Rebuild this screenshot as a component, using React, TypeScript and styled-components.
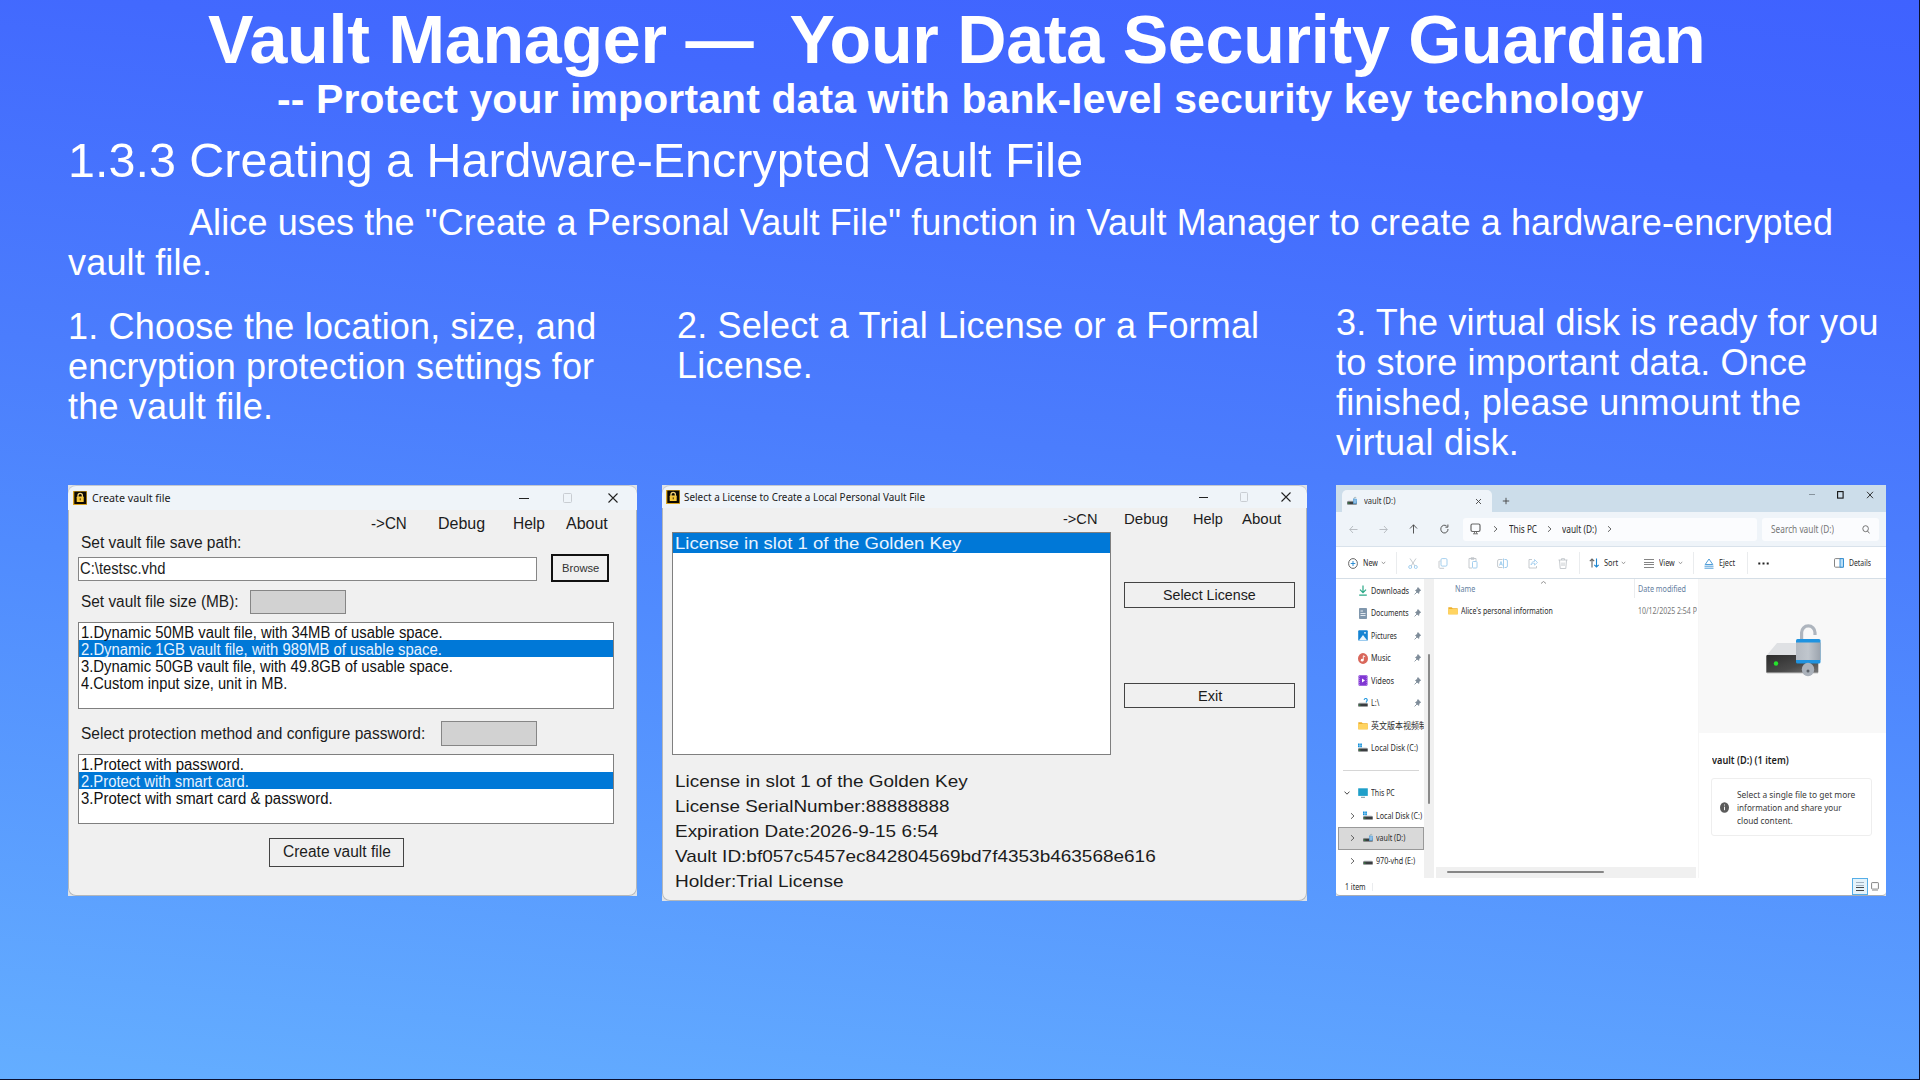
import React, { ReactNode, useLayoutEffect, useRef, useState } from "react";
import styled, { createGlobalStyle, css } from "styled-components";

const ARIAL = '"Liberation Sans", Arial, sans-serif';
const SEGOE = '"Noto Sans", "Noto Sans CJK SC", sans-serif';

const GlobalStyle = createGlobalStyle`
  *, *::before, *::after { box-sizing: border-box; }
  html, body { margin: 0; padding: 0; background: #000; }
  svg { display: block; flex: none; }
`;

/* ---------- text that fills a given measure ---------- */

const Measure = styled.span<{ $w: number; $ml: number }>`
  display: block;
  flex: none;
  width: ${(p) => p.$w}px;
  margin-left: ${(p) => p.$ml}px;
  white-space: pre;
`;

const Run = styled.span`
  display: inline-block;
  transform-origin: 0 50%;
`;

type FitProps = { w: number; ml?: number; spaced?: boolean; children: string };

function Fit({ w, ml = 0, spaced = false, children }: FitProps) {
  const ref = useRef<HTMLSpanElement>(null);
  const [natural, setNatural] = useState(0);
  useLayoutEffect(() => {
    if (ref.current) setNatural(ref.current.offsetWidth);
  }, [children]);
  const style = !natural
    ? undefined
    : spaced
      ? { letterSpacing: (w - natural) / children.length }
      : { transform: `scaleX(${w / natural})` };
  return (
    <Measure $w={w} $ml={ml}>
      <Run ref={ref} style={style}>
        {children}
      </Run>
    </Measure>
  );
}

/* ---------- slide ---------- */

const Slide = styled.main`
  width: 1920px;
  height: 1080px;
  overflow: hidden;
  display: flex;
  flex-direction: column;
  color: #fff;
  font-family: ${ARIAL};
  background: linear-gradient(186deg, #3f62ff 0%, #4269fe 15%, #4b7dfd 42%, #508bfe 58%, #64aeff 100%);
  border-right: 1px solid #0a1030;
  border-bottom: 1px solid #0a1030;
`;

const Title = styled.h1`
  margin: 1px 0 0 208px;
  height: 76px;
  font-size: 68.2px;
  line-height: 76px;
  font-weight: 700;
`;

const Subtitle = styled.h2`
  margin: 0 0 0 277px;
  height: 44px;
  font-size: 40.9px;
  line-height: 44px;
  font-weight: 700;
`;

const Heading = styled.h3`
  margin: 12px 0 0 68px;
  height: 55px;
  font-size: 48.4px;
  line-height: 55px;
  font-weight: 400;
`;

const Paragraph = styled.div<{ $top?: number }>`
  margin-top: ${(p) => p.$top ?? 0}px;
  font-size: 36px;
  line-height: 40px;
`;

const Intro = styled(Paragraph)`
  margin: 15px 0 0 68px;
  height: 80px;
`;

const Steps = styled.section`
  display: grid;
  grid-template-columns: 595px 673px 560px;
  padding: 23px 0 0 68px;
  height: 202px;
`;

const Shots = styled.section`
  display: flex;
  align-items: flex-start;
  padding-left: 68px;
`;

/* ---------- dialog windows ---------- */

const Backing = styled.div<{ $w: number; $h: number; $ml?: number }>`
  flex: none;
  width: ${(p) => p.$w}px;
  height: ${(p) => p.$h}px;
  margin-left: ${(p) => p.$ml ?? 0}px;
  background: #dfe3e8;
`;

const Dialog = styled.div`
  height: 100%;
  display: flex;
  flex-direction: column;
  overflow: hidden;
  border-radius: 8px;
  background: #f0f0f0;
  box-shadow: inset 0 0 0 1px #b3b7bb;
  color: #1c1c1c;
  font-family: ${ARIAL};
`;

const TitleBar = styled.div<{ $h: number }>`
  flex: none;
  display: flex;
  align-items: center;
  height: ${(p) => p.$h}px;
  background: #eff4f9;
  box-shadow: inset 0 1px 0 #c3c8d0;
  border-radius: 8px 8px 0 0;
  font-family: ${SEGOE};
  font-size: 11px;
  color: #1b1b1b;
`;

const Row = styled.div<{ $h: number; $size?: number; $mt?: number; $top?: boolean }>`
  flex: none;
  display: flex;
  align-items: ${(p) => (p.$top ? "flex-start" : "center")};
  height: ${(p) => p.$h}px;
  margin-top: ${(p) => p.$mt ?? 0}px;
  font-size: ${(p) => p.$size ?? 16}px;
  line-height: 1.15;
`;

const MenuRow = styled(Row)`
  padding-top: 1px;
`;

const LabelText = styled.div`
  padding-top: 1px;
`;

const Field = styled.div<{ $w: number; $h: number; $ml?: number; $mt?: number; $off?: boolean }>`
  flex: none;
  display: flex;
  align-items: center;
  width: ${(p) => p.$w}px;
  height: ${(p) => p.$h}px;
  margin: ${(p) => p.$mt ?? 0}px 0 0 ${(p) => p.$ml ?? 0}px;
  border: 1px solid #868686;
  background: ${(p) => (p.$off ? "#d2d2d2" : "#fff")};
`;

const PushButton = styled.div<{ $w: number; $h: number; $ml?: number; $mt?: number; $strong?: boolean }>`
  flex: none;
  display: flex;
  align-items: center;
  justify-content: center;
  width: ${(p) => p.$w}px;
  height: ${(p) => p.$h}px;
  margin: ${(p) => p.$mt ?? 0}px 0 0 ${(p) => p.$ml ?? 0}px;
  border: ${(p) => (p.$strong ? "2px solid #111" : "1px solid #444")};
  background: #f0f0f0;
  ${(p) => p.$strong && css`padding-top: 2px; font-size: 11.5px; color: #333;`}
`;

const ListBox = styled.div<{ $w: number; $h: number; $ml: number; $mt?: number }>`
  flex: none;
  width: ${(p) => p.$w}px;
  height: ${(p) => p.$h}px;
  margin: ${(p) => p.$mt ?? 0}px 0 0 ${(p) => p.$ml}px;
  border: 1px solid #7f7f7f;
  background: #fff;
`;

const Option = styled.div<{ $h: number; $size: number; $on?: boolean }>`
  display: flex;
  align-items: center;
  height: ${(p) => p.$h}px;
  padding-top: 1.5px;
  font-size: ${(p) => p.$size}px;
  line-height: 1.1;
  color: ${(p) => (p.$on ? "#e8f3ff" : "#111")};
  background: ${(p) => (p.$on ? "#0078d7" : "transparent")};
`;

const Split = styled.div`
  display: flex;
  align-items: flex-start;
`;

const Slot = styled.span<{ $ml: number }>`
  flex: none;
  margin-left: ${(p) => p.$ml}px;
`;

function LockIcon() {
  return (
    <svg width="14" height="14" viewBox="0 0 14 14">
      <rect width="14" height="14" fill="#d9a521" />
      <rect x="1.3" y="0.6" width="12" height="12.4" fill="#0c0903" />
      <path d="M5 6.500V4.600a2.200 2.200 0 0 1 4.400 0v1.900" fill="none" stroke="#f0d27a" strokeWidth="1.300" />
      <rect x="3.700" y="5.600" width="7" height="5.400" rx="0.600" fill="#f7c93c" />
      <rect x="6.700" y="7.300" width="1.100" height="2" fill="#5a3c05" />
    </svg>
  );
}

function Caption({ first, gap, small }: { first: number; gap: [number, number]; small?: boolean }) {
  const s = small ? 9 : 10;
  return (
    <>
      <Slot $ml={first}>
        <svg width={s} height="10" viewBox={`0 0 ${s} 10`}><path d={`M0 5.5H${s}`} stroke="#222" /></svg>
      </Slot>
      <Slot $ml={gap[0]}>
        <svg width={s} height="10" viewBox={`0 0 ${s} 10`}>
          <rect x="0.5" y="0.5" width={s - 2} height="9" rx="1" fill="none" stroke="#c9cdd2" />
        </svg>
      </Slot>
      <Slot $ml={gap[1]}>
        <svg width="10" height="10" viewBox="0 0 10 10"><path d="M0.5 0.5l9 9M9.5 0.5l-9 9" stroke="#222" strokeWidth="1.1" /></svg>
      </Slot>
    </>
  );
}

function CreateVaultDialog() {
  return (
    <Backing $w={569} $h={411}>
      <Dialog>
        <TitleBar $h={25}>
          <Slot $ml={5}><LockIcon /></Slot>
          <Fit ml={5} w={79}>Create vault file</Fit>
          <Caption first={348} gap={[34, 35]} />
        </TitleBar>
        <MenuRow $h={27} $size={16}>
          <Fit ml={303} w={36}>{"->CN"}</Fit>
          <Fit ml={31} w={47}>Debug</Fit>
          <Fit ml={28} w={32}>Help</Fit>
          <Fit ml={21} w={42}>About</Fit>
        </MenuRow>
        <Row $h={13} $size={15.8}>
          <Fit ml={13} w={160}>Set vault file save path:</Fit>
        </Row>
        <Row $h={28} $mt={4} $top>
          <Field $ml={10} $mt={3} $w={459} $h={24}>
            <Fit ml={1} w={85}>C:\testsc.vhd</Fit>
          </Field>
          <PushButton $ml={14} $w={58} $h={28} $strong>
            <Fit w={37}>Browse</Fit>
          </PushButton>
        </Row>
        <Row $h={24} $mt={8} $size={15.8}>
          <LabelText><Fit ml={13} w={158}>Set vault file size (MB):</Fit></LabelText>
          <Field $ml={11} $w={96} $h={24} $off />
        </Row>
        <ListBox $ml={10} $mt={8} $w={536} $h={87}>
          <Option $h={17} $size={15.6}><Fit ml={2} w={362}>1.Dynamic 50MB vault file, with 34MB of usable space.</Fit></Option>
          <Option $h={17} $size={15.6} $on><Fit ml={2} w={361}>2.Dynamic 1GB vault file, with 989MB of usable space.</Fit></Option>
          <Option $h={17} $size={15.6}><Fit ml={2} w={372}>3.Dynamic 50GB vault file, with 49.8GB of usable space.</Fit></Option>
          <Option $h={17} $size={15.6}><Fit ml={2} w={206}>4.Custom input size, unit in MB.</Fit></Option>
        </ListBox>
        <Row $h={25} $mt={12} $size={15.8}>
          <LabelText><Fit ml={13} w={344}>Select protection method and configure password:</Fit></LabelText>
          <Field $ml={16} $w={96} $h={25} $off />
        </Row>
        <ListBox $ml={10} $mt={8} $w={536} $h={70}>
          <Option $h={17} $size={15.6}><Fit ml={2} w={163}>1.Protect with password.</Fit></Option>
          <Option $h={17} $size={15.6} $on><Fit ml={2} w={168}>2.Protect with smart card.</Fit></Option>
          <Option $h={17} $size={15.6}><Fit ml={2} w={252}>3.Protect with smart card &amp; password.</Fit></Option>
        </ListBox>
        <Row $h={29} $mt={14} $size={15.8}>
          <PushButton $ml={201} $w={135} $h={29}>
            <Fit ml={1} w={108}>Create vault file</Fit>
          </PushButton>
        </Row>
      </Dialog>
    </Backing>
  );
}

function SelectLicenseDialog() {
  return (
    <Backing $w={645} $h={416} $ml={25}>
      <Dialog>
        <TitleBar $h={23}>
          <Slot $ml={4}><LockIcon /></Slot>
          <Fit ml={4} w={241}>Select a License to Create a Local Personal Vault File</Fit>
          <Caption first={274} gap={[32, 32]} small />
        </TitleBar>
        <Row $h={22} $size={15}>
          <Fit ml={401} w={34}>{"->CN"}</Fit>
          <Fit ml={27} w={44}>Debug</Fit>
          <Fit ml={25} w={30}>Help</Fit>
          <Fit ml={19} w={39}>About</Fit>
        </Row>
        <Split>
          <ListBox $ml={10} $mt={2} $w={439} $h={223}>
            <Option $h={20} $size={16.8} $on><Fit ml={2} w={286}>License in slot 1 of the Golden Key</Fit></Option>
          </ListBox>
          <Row as="div" $h={210} $top $size={15.2}>
            <div>
              <PushButton $ml={13} $mt={52} $w={171} $h={26}><Fit w={93}>Select License</Fit></PushButton>
              <PushButton $ml={13} $mt={75} $w={171} $h={25}><Fit w={24}>Exit</Fit></PushButton>
            </div>
          </Row>
        </Split>
        <Row $h={25} $size={17} $mt={14}><Fit ml={13} w={293}>License in slot 1 of the Golden Key</Fit></Row>
        <Row $h={25} $size={17}><Fit ml={13} w={275}>License SerialNumber:88888888</Fit></Row>
        <Row $h={25} $size={17}><Fit ml={13} w={263}>Expiration Date:2026-9-15 6:54</Fit></Row>
        <Row $h={25} $size={17}><Fit ml={13} w={481}>Vault ID:bf057c5457ec842804569bd7f4353b463568e616</Fit></Row>
        <Row $h={25} $size={17}><Fit ml={13} w={169}>Holder:Trial License</Fit></Row>
      </Dialog>
    </Backing>
  );
}

/* ---------- file explorer ---------- */

const Explorer = styled.div`
  height: 100%;
  display: flex;
  flex-direction: column;
  overflow: hidden;
  border-radius: 0 0 4px 4px;
  background: #fff;
  color: #2b2b2b;
  font-family: ${SEGOE};
  font-size: 9px;
  line-height: 1.3;
  border-bottom: 1px solid #a9adb3;
`;

const TabStrip = styled.div`
  flex: none;
  display: flex;
  align-items: flex-end;
  height: 27px;
  background: #ccddea;
`;

const Tab = styled.div`
  display: flex;
  align-items: center;
  width: 150px;
  height: 22px;
  margin-left: 6px;
  border-radius: 5px 5px 0 0;
  background: #eff4f9;
`;

const StripTools = styled.div`
  display: flex;
  align-items: center;
  height: 22px;
`;

const StripControls = styled.div`
  display: flex;
  align-items: center;
  align-self: flex-start;
  height: 19px;
`;

const NavBar = styled.div`
  flex: none;
  display: flex;
  align-items: center;
  height: 35px;
  background: #eff4f9;
  border-bottom: 1px solid #d9e2eb;
  font-size: 10px;
`;

const NavBox = styled.div<{ $w: number; $ml: number }>`
  flex: none;
  display: flex;
  align-items: center;
  width: ${(p) => p.$w}px;
  height: 23px;
  margin-left: ${(p) => p.$ml}px;
  border-radius: 3px;
  background: #fbfcfe;
`;

const ToolBar = styled.div`
  flex: none;
  display: flex;
  align-items: center;
  height: 32px;
  padding-top: 1px;
  border-bottom: 1px solid #d5dee6;
`;

const Rule = styled.i<{ $ml: number; $h?: number }>`
  flex: none;
  width: 1px;
  height: ${(p) => p.$h ?? 22}px;
  margin-left: ${(p) => p.$ml}px;
  background: #eaecee;
`;

const Body = styled.div`
  flex: none;
  display: flex;
  height: 299px;
`;

const Sidebar = styled.nav`
  width: 88px;
  padding-top: 0.5px;
  overflow: hidden;
`;

const SideItem = styled.div<{ $on?: boolean }>`
  display: flex;
  align-items: center;
  width: ${(p) => (p.$on ? 86 : 88)}px;
  height: 22.5px;
  overflow: hidden;
  ${(p) => p.$on && css`
    margin-left: 2px;
    background: #d9d9d9;
    box-shadow: inset 0 0 0 1px #999;
  `}
`;

const SideIcon = styled.span<{ $ml: number }>`
  flex: none;
  width: 10px;
  margin-left: ${(p) => p.$ml}px;
`;

const SideRule = styled.div`
  display: flex;
  align-items: center;
  height: 22.5px;
  padding: 0 5px 0 7px;
  &::before { content: ""; flex: 1; height: 1px; background: #d6d6d6; }
`;

const VScroll = styled.div`
  width: 10px;
  padding: 75px 0 0 4px;
  background: #f0f0f0;
  &::before { content: ""; display: block; width: 2px; height: 150px; background: #8a8a8a; border-radius: 1px; }
`;

const Files = styled.div`
  display: flex;
  flex-direction: column;
  width: 264px;
  padding-left: 2px;
  overflow: hidden;
`;

const FileHead = styled.div`
  display: flex;
  align-items: center;
  height: 19px;
  color: #6580a0;
`;

const FileRow = styled.div`
  display: flex;
  align-items: center;
  height: 25px;
  overflow: hidden;
`;

const Muted = styled.span`color: #777;`;

const HScroll = styled.div`
  width: 260px;
  height: 11px;
  margin-top: auto;
  padding: 4px 0 0 11px;
  background: #f0f0f0;
  &::before { content: ""; display: block; width: 157px; height: 2px; background: #868686; border-radius: 1px; }
`;

const DetailsPane = styled.aside`
  width: 188px;
  border-left: 1px solid #f6f6f6;
`;

const Preview = styled.div`
  height: 154px;
  padding: 45px 0 0 67px;
  background: #f8f8f8;
`;

const PaneTitle = styled.div`
  margin: 20px 0 0 13px;
  height: 14px;
  font-size: 10.5px;
  line-height: 14px;
  font-weight: 600;
  color: #1d1d1d;
`;

const Hint = styled.div`
  display: flex;
  align-items: center;
  width: 161px;
  height: 58px;
  margin: 11px 0 0 12px;
  padding: 1px 0 0 8px;
  border: 1px solid #eeeeee;
  border-radius: 3px;
  font-size: 9.8px;
  line-height: 13.2px;
  color: #3a3a3a;
`;

const StatusBar = styled.div`
  flex: 1;
  display: flex;
  align-items: center;
`;

const ViewToggle = styled.span`
  display: flex;
  align-items: center;
  justify-content: center;
  width: 16px;
  height: 17px;
  margin-left: 479px;
  border: 1px solid #55aee8;
  background: #e4f3fb;
`;

function Glyph({ w = 10, h = 10, box, children }: { w?: number; h?: number; box?: string; children: ReactNode }) {
  return (
    <svg width={w} height={h} viewBox={box ?? `0 0 ${w} ${h}`} fill="none" stroke="#555" strokeWidth="0.9">
      {children}
    </svg>
  );
}

const Chevron = () => <Glyph w={5} h={8}><path d="M1 1.2l3 2.8-3 2.8" /></Glyph>;
const DownChevron = () => <Glyph w={5} h={4}><path d="M0.8 0.8l1.7 2 1.7-2" stroke="#888" strokeWidth="0.8" /></Glyph>;

const Pin = () => (
  <Glyph w={7} h={8}><path d="M4 .6l2.600 2.800-1.500.8-.5 2.200-3-3 1.600-.8zM3 5L.6 7.400" fill="#7d8b98" stroke="#7d8b98" strokeWidth="0.900" /></Glyph>
);

const Folder = () => (
  <Glyph w={10} h={9}>
    <path d="M0.3 1.2h3.4l1 1h5v6H0.3z" fill="#eeb02c" stroke="none" />
    <path d="M0.3 3h9.4v5.4H0.3z" fill="#ffd461" stroke="none" />
  </Glyph>
);

function Disk({ mark }: { mark?: "windows" | "lock" | "help" }) {
  return (
    <Glyph w={10} h={10}>
      <path d="M1.5 4.5h7l1.2 1.3H0.3z" fill="#cfd3d6" stroke="none" />
      <rect x="0.3" y="5.5" width="9.4" height="3" fill="#3a3d40" stroke="none" />
      <rect x="1.3" y="6.6" width="1" height="1" fill="#3ccc4b" stroke="none" />
      {mark === "windows" && <path d="M0 .4h1.7v1.8H0zM2.2.4h1.7v1.8H2.2zM0 2.6h1.7v1.6H0zM2.2 2.6h1.7v1.6H2.2z" fill="#1391dc" stroke="none" />}
      {mark === "lock" && (
        <>
          <path d="M7 3.5V2a1.2 1.2 0 0 1 2.2 0" stroke="#9aa" strokeWidth="0.8" />
          <rect x="6.3" y="3" width="3.4" height="4.6" fill="#8fbde4" stroke="#4a9ddb" strokeWidth="0.5" />
        </>
      )}
      {mark === "help" && <path d="M6.2 2a1.5 1.5 0 1 1 2.2 1.3v1.2" stroke="#2b9be0" strokeWidth="1.1" />}
    </Glyph>
  );
}

const Drive = () => (
  <svg width="55" height="53" viewBox="0 0 55 53">
    <defs>
      <linearGradient id="front" x1="0" y1="0" x2="1" y2="1">
        <stop offset="0" stopColor="#2c2c2c" /><stop offset="0.6" stopColor="#4a4a4a" /><stop offset="1" stopColor="#777" />
      </linearGradient>
      <linearGradient id="steel" x1="0" y1="0" x2="1" y2="0">
        <stop offset="0" stopColor="#b4bac2" /><stop offset="0.5" stopColor="#c0c6cd" /><stop offset="1" stopColor="#9ba3ad" />
      </linearGradient>
    </defs>
    <path d="M11 19h32l9 12.500H0.500z" fill="#dfe1e4" />
    <rect x="0.300" y="31" width="52" height="18" rx="1" fill="url(#front)" />
    <path d="M1 48.800h51" stroke="#a5a5a5" />
    <circle cx="10" cy="39.500" r="2.200" fill="#25e32c" />
    <path d="M35.600 16V8.500a6.600 6.600 0 0 1 13.400 0V11" fill="none" stroke="#aeb5be" strokeWidth="3.200" />
    <rect x="30" y="15" width="24.500" height="24.500" rx="1.500" fill="#1f93e0" />
    <rect x="30" y="18.500" width="24.500" height="17.500" fill="url(#steel)" />
    <ellipse cx="42" cy="45.500" rx="6.200" ry="6.700" fill="#aab1ba" />
    <circle cx="42" cy="47" r="1.500" fill="#5b6168" />
  </svg>
);

const sideIcons: Record<string, ReactNode> = {
  Downloads: <Glyph w={10} h={11}><path d="M5 .5v7M2 4.700l3 3 3-3M1.200 10.200h7.600" stroke="#2aa886" strokeWidth="1.200" /></Glyph>,
  Documents: (
    <Glyph w={10} h={11}>
      <rect x="1" y="0" width="8" height="11" rx="0.800" fill="#8097ad" stroke="none" />
      <path d="M2.500 3h2.500M2.500 5.500h5M2.500 7.500h5" stroke="#eef3f7" />
    </Glyph>
  ),
  Pictures: (
    <Glyph w={10} h={11}>
      <rect x="0.200" y="0.300" width="9.600" height="10.400" rx="1" fill="#1583d3" stroke="none" />
      <path d="M.8 10.500L5 5l4.200 5.500z" fill="#e9f5fd" stroke="none" /><circle cx="7" cy="2.800" r="0.900" fill="#fff" stroke="none" />
    </Glyph>
  ),
  Music: (
    <Glyph w={10} h={11}>
      <ellipse cx="5" cy="5.500" rx="5" ry="5.400" fill="#d9675b" stroke="none" />
      <circle cx="4.200" cy="7.200" r="1.400" fill="#fff" stroke="none" /><path d="M5.300 7V2.800l1.900.9" stroke="#fff" />
    </Glyph>
  ),
  Videos: (
    <Glyph w={10} h={11}>
      <rect x="0.500" y="0.200" width="9" height="10.600" rx="1" fill="#8138d3" stroke="none" />
      <path d="M4 3.500l3 2-3 2z" fill="#fff" stroke="none" /><path d="M1.500 1v9M8.700 1v9" stroke="#c79cf3" strokeWidth="0.600" strokeDasharray="1 1" />
    </Glyph>
  ),
};

const pinned: [string, number][] = [["Downloads", 38], ["Documents", 38], ["Pictures", 26], ["Music", 20], ["Videos", 23]];

function PinSlot({ textWidth }: { textWidth: number }) {
  return <Slot $ml={43 - textWidth}><Pin /></Slot>;
}

function ExplorerWindow() {
  return (
    <Backing $w={550} $h={411} $ml={29}>
      <Explorer>
        <TabStrip>
          <Tab>
            <Slot $ml={5}><Disk mark="lock" /></Slot>
            <Fit ml={7} w={31}>vault (D:)</Fit>
            <Slot $ml={80}><Glyph w={7} h={7}><path d="M1 1l5 5M6 1L1 6" stroke="#444" /></Glyph></Slot>
          </Tab>
          <StripTools>
            <Slot $ml={10}><Glyph w={8} h={8}><path d="M4 .8v6.400M.8 4h6.400" stroke="#444" /></Glyph></Slot>
          </StripTools>
          <StripControls>
            <Slot $ml={299}><Glyph w={6} h={8}><path d="M0 3.500h6" stroke="#7f8a94" /></Glyph></Slot>
            <Slot $ml={22}><Glyph w={7} h={8}><rect x="0.600" y="0.600" width="5.500" height="6.500" stroke="#111" strokeWidth="1.100" /></Glyph></Slot>
            <Slot $ml={22}><Glyph w={8} h={8}><path d="M1 .8l6 6.400M7 .8L1 7.200" stroke="#222" /></Glyph></Slot>
          </StripControls>
        </TabStrip>

        <NavBar>
          <Slot $ml={13}><Glyph w={9} h={9}><path d="M8.500 4.500H.8M4 1L.8 4.500 4 8" stroke="#b3b8bd" /></Glyph></Slot>
          <Slot $ml={21}><Glyph w={9} h={9}><path d="M.5 4.500h7.700M5 1l3.200 3.500L5 8" stroke="#b3b8bd" /></Glyph></Slot>
          <Slot $ml={21}><Glyph w={9} h={10}><path d="M4.500 9.500V.8M1 4.500L4.500.8 8 4.500" stroke="#444" /></Glyph></Slot>
          <Slot $ml={22}><Glyph w={9} h={10}><path d="M8 5a3.600 3.900 0 1 1-1.400-3M7.900.5v2.700H5.400" stroke="#444" /></Glyph></Slot>
          <NavBox $ml={14} $w={294}>
            <Slot $ml={7}><Glyph w={11} h={12}><rect x="1" y="1" width="9" height="7.500" rx="1.400" stroke="#666" strokeWidth="1.200" /><path d="M3 10.800h5M4.500 8.500v2M6.500 8.500v2" stroke="#666" /></Glyph></Slot>
            <Slot $ml={12}><Chevron /></Slot>
            <Fit ml={11} w={28}>This PC</Fit>
            <Slot $ml={10}><Chevron /></Slot>
            <Fit ml={10} w={35}>vault (D:)</Fit>
            <Slot $ml={10}><Chevron /></Slot>
          </NavBox>
          <NavBox $ml={5} $w={117}>
            <Muted><Fit ml={9} w={63}>Search vault (D:)</Fit></Muted>
            <Slot $ml={28}><Glyph w={8} h={9}><ellipse cx="3.600" cy="3.700" rx="2.800" ry="3" stroke="#666" /><path d="M5.500 6l2 2.400" stroke="#666" /></Glyph></Slot>
          </NavBox>
        </NavBar>

        <ToolBar>
          <Slot $ml={12}><Glyph w={10} h={11}><ellipse cx="5" cy="5.500" rx="4.400" ry="4.900" /><path d="M5 3v5M2.700 5.500h4.600" stroke="#1c84cf" /></Glyph></Slot>
          <Fit ml={5} w={15}>New</Fit>
          <Slot $ml={3}><DownChevron /></Slot>
          <Rule $ml={10} />
          <Slot $ml={11}><Glyph w={10} h={11}><path d="M2 .5l5 7.500M8 .5L3 8" stroke="#bfc4c8" /><circle cx="2.200" cy="9" r="1.500" stroke="#9ac9ec" /><circle cx="7.800" cy="9" r="1.500" stroke="#9ac9ec" /></Glyph></Slot>
          <Slot $ml={20}><Glyph w={10} h={11}><rect x="3" y="0.600" width="6" height="7.500" rx="1.200" stroke="#9ac9ec" /><path d="M2.500 3H1.400L1 3.500v6l.6.8h4.500" stroke="#bfc4c8" /></Glyph></Slot>
          <Slot $ml={20}><Glyph w={10} h={12}><path d="M4 11H1V1.500h7V4M3 .8h3v1.500H3z" stroke="#bfc4c8" /><rect x="4.500" y="4.500" width="4.500" height="6.500" rx="0.800" stroke="#9ac9ec" /></Glyph></Slot>
          <Slot $ml={19}><Glyph w={11} h={11}><path d="M5.500 1.500H2A1.500 1.500 0 0 0 .6 3v5A1.500 1.500 0 0 0 2 9.500h3.500" stroke="#bfc4c8" /><path d="M7.500 1.500H9A1.500 1.500 0 0 1 10.400 3v5A1.500 1.500 0 0 1 9 9.500H7.500M6.500.5v10M2.500 7.500L4 3.500l1.400 4M3 6.200h2" stroke="#9ac9ec" /></Glyph></Slot>
          <Slot $ml={20}><Glyph w={10} h={11}><path d="M4 1.500H1v8.500h7.500V8" stroke="#bfc4c8" /><path d="M3 7c.3-2.500 1.500-3.500 3.500-3.500v-2L9.500 4.500l-3 2.600V5.200C5 5.200 4 5.600 3 7z" stroke="#9ac9ec" strokeWidth="0.800" /></Glyph></Slot>
          <Slot $ml={20}><Glyph w={10} h={11}><path d="M.5 2h9M3.500 2V.7h3V2M1.500 2l.7 8.500h5.600L8.500 2M4 4.500v3.500M6 4.500v3.500" stroke="#bfc4c8" /></Glyph></Slot>
          <Rule $ml={11} />
          <Slot $ml={9}><Glyph w={11} h={10}><path d="M3 9.500V1M.8 3.200L3 1l2.200 2.200" stroke="#666" strokeWidth="1.100" /><path d="M7.500.5v8.500M5.300 6.800L7.500 9l2.200-2.200" stroke="#1c84cf" strokeWidth="1.100" /></Glyph></Slot>
          <Fit ml={4} w={14}>Sort</Fit>
          <Slot $ml={3}><DownChevron /></Slot>
          <Slot $ml={18}><Glyph w={10} h={9}><path d="M0 .5h10M0 3.500h10M0 5.500h10M0 8.500h10" stroke="#777" /></Glyph></Slot>
          <Fit ml={5} w={16}>View</Fit>
          <Slot $ml={3}><DownChevron /></Slot>
          <Rule $ml={10} />
          <Slot $ml={10}><Glyph w={10} h={11}><path d="M5 1l3.800 5.500H1.200zM.5 8.200h9M.5 10.200h9" stroke="#3b92d4" /></Glyph></Slot>
          <Fit ml={5} w={16}>Eject</Fit>
          <Rule $ml={12} />
          <Slot $ml={10}><Glyph w={11} h={3}><path d="M0.300 1.500h2M4.500 1.500h2M8.700 1.500h2" stroke="#222" strokeWidth="1.800" /></Glyph></Slot>
          <Slot $ml={65}><Glyph w={10} h={10}><rect x="0.500" y="0.600" width="9" height="8.600" rx="1" stroke="#777" /><path d="M6 .6h3.500v8.600H6z" fill="#b9def6" stroke="#2a8bd2" /></Glyph></Slot>
          <Fit ml={5} w={22}>Details</Fit>
        </ToolBar>

        <Body>
          <Sidebar>
            {pinned.map(([name, w]) => (
              <SideItem key={name}>
                <SideIcon $ml={22}>{sideIcons[name]}</SideIcon>
                <Fit ml={3} w={w}>{name}</Fit>
                <PinSlot textWidth={w} />
              </SideItem>
            ))}
            <SideItem>
              <SideIcon $ml={22}><Disk mark="help" /></SideIcon>
              <Fit ml={3} w={8}>L:\</Fit>
              <PinSlot textWidth={8} />
            </SideItem>
            <SideItem><SideIcon $ml={22}><Folder /></SideIcon><Fit ml={3} w={56}>英文版本视频制</Fit></SideItem>
            <SideItem><SideIcon $ml={22}><Disk mark="windows" /></SideIcon><Fit ml={3} w={47}>Local Disk (C:)</Fit></SideItem>
            <SideRule />
            <SideItem>
              <Slot $ml={8}><Glyph w={6} h={4}><path d="M.5.600L3 3.200 5.500.600" stroke="#333" /></Glyph></Slot>
              <SideIcon $ml={8}><Glyph w={10} h={10}><rect x="0.200" y="0.300" width="9.600" height="7.600" fill="#1f9fc9" stroke="none" /><path d="M3 9.300h4" stroke="#6b8896" /></Glyph></SideIcon>
              <Fit ml={3} w={24}>This PC</Fit>
            </SideItem>
            <SideItem><Slot $ml={14}><Chevron /></Slot><SideIcon $ml={8}><Disk mark="windows" /></SideIcon><Fit ml={3} w={46}>Local Disk (C:)</Fit></SideItem>
            <SideItem $on><Slot $ml={12}><Chevron /></Slot><SideIcon $ml={8}><Disk mark="lock" /></SideIcon><Fit ml={3} w={29}>vault (D:)</Fit></SideItem>
            <SideItem><Slot $ml={14}><Chevron /></Slot><SideIcon $ml={8}><Disk /></SideIcon><Fit ml={3} w={39}>970-vhd (E:)</Fit></SideItem>
          </Sidebar>
          <VScroll />
          <Files>
            <FileHead>
              <Fit ml={19} w={20}>Name</Fit>
              <Slot $ml={65}><Glyph w={7} h={16}><path d="M1 2.500l2.500-2L6 2.500" stroke="#888" /></Glyph></Slot>
              <Rule $ml={87} $h={19} />
              <Fit ml={3} w={48}>Date modified</Fit>
            </FileHead>
            <FileRow>
              <Slot $ml={12}><Folder /></Slot>
              <Fit ml={3} w={92}>Alice's personal information</Fit>
              <Muted><Fit ml={85} w={59}>10/12/2025 2:54 P</Fit></Muted>
            </FileRow>
            <HScroll />
          </Files>
          <DetailsPane>
            <Preview><Drive /></Preview>
            <PaneTitle><Fit w={77}>vault (D:) (1 item)</Fit></PaneTitle>
            <Hint>
              <Glyph w={9} h={11}>
                <ellipse cx="4.500" cy="5.500" rx="4.500" ry="5.300" fill="#5b5b5b" stroke="none" />
                <path d="M4.500 2.500v1M4.500 4.700v3.500" stroke="#fff" />
              </Glyph>
              <div>
                <Fit ml={8} w={118}>Select a single file to get more</Fit>
                <Fit ml={8} w={105}>information and share your</Fit>
                <Fit ml={8} w={56}>cloud content.</Fit>
              </div>
            </Hint>
          </DetailsPane>
        </Body>

        <StatusBar>
          <Fit ml={9} w={21}>1 item</Fit>
          <Rule $ml={6} $h={8} />
          <ViewToggle><Glyph w={8} h={9}><path d="M0 .5h8M0 3.500h8" stroke="#9ab" /><path d="M0 5.500h8M0 8.500h8" stroke="#333" /></Glyph></ViewToggle>
          <Slot $ml={3}><Glyph w={8} h={9}><rect x="0.600" y="0.600" width="6.800" height="6.500" rx="0.600" stroke="#777" /><path d="M1 8.500h6" stroke="#bbb" /></Glyph></Slot>
        </StatusBar>
      </Explorer>
    </Backing>
  );
}

export default function App() {
  return (
    <>
      <GlobalStyle />
      <Slide>
        <Title><Fit w={1497} spaced>{"Vault Manager —  Your Data Security Guardian"}</Fit></Title>
        <Subtitle><Fit w={1367} spaced>-- Protect your important data with bank-level security key technology</Fit></Subtitle>
        <Heading><Fit w={1015} spaced>1.3.3 Creating a Hardware-Encrypted Vault File</Fit></Heading>
        <Intro>
          <Fit ml={121} w={1644} spaced>Alice uses the "Create a Personal Vault File" function in Vault Manager to create a hardware-encrypted</Fit>
          <Fit w={144} spaced>vault file.</Fit>
        </Intro>
        <Steps>
          <Paragraph $top={1}>
            <Fit w={528} spaced>1. Choose the location, size, and</Fit>
            <Fit w={526} spaced>encryption protection settings for</Fit>
            <Fit w={205} spaced>the vault file.</Fit>
          </Paragraph>
          <Paragraph>
            <Fit ml={14} w={582} spaced>2. Select a Trial License or a Formal</Fit>
            <Fit ml={14} w={136} spaced>License.</Fit>
          </Paragraph>
          <Paragraph $top={-3}>
            <Fit w={543} spaced>3. The virtual disk is ready for you</Fit>
            <Fit w={471} spaced>to store important data. Once</Fit>
            <Fit w={465} spaced>finished, please unmount the</Fit>
            <Fit w={183} spaced>virtual disk.</Fit>
          </Paragraph>
        </Steps>
        <Shots>
          <CreateVaultDialog />
          <SelectLicenseDialog />
          <ExplorerWindow />
        </Shots>
      </Slide>
    </>
  );
}
